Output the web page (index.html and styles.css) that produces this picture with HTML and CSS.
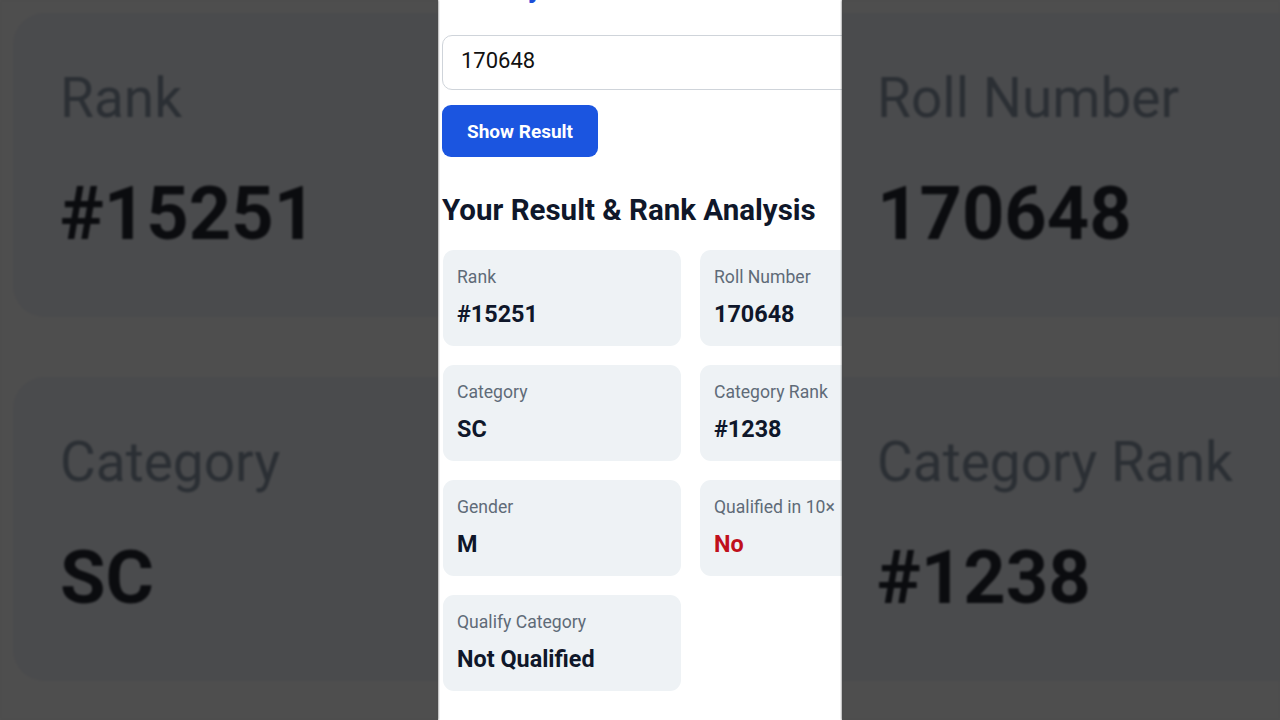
FILE: index.html
```html
<!DOCTYPE html>
<html lang="en">
<head>
<meta charset="utf-8">
<title>Your Result &amp; Rank Analysis</title>
<link rel="stylesheet" href="styles.css">
</head>
<body>
<div class="stage">
  <aside class="side side-left" aria-hidden="true">
    <div class="bcard">
      <div class="blabel">Rank</div>
      <div class="bvalue">#15251</div>
    </div>
    <div class="bcard">
      <div class="blabel">Category</div>
      <div class="bvalue">SC</div>
    </div>
  </aside>

  <main class="phone">
    <div class="phone-inner">
      <h1 class="title">Check your Rank</h1>
      <input class="roll-input" type="text" value="170648">
      <button class="btn" type="button">Show Result</button>
      <h2 class="section-title">Your Result &amp; Rank Analysis</h2>
      <div class="grid">
        <div class="card"><div class="label">Rank</div><div class="value">#15251</div></div>
        <div class="card"><div class="label">Roll Number</div><div class="value">170648</div></div>
        <div class="card"><div class="label">Category</div><div class="value">SC</div></div>
        <div class="card"><div class="label">Category Rank</div><div class="value">#1238</div></div>
        <div class="card"><div class="label">Gender</div><div class="value">M</div></div>
        <div class="card"><div class="label">Qualified in 10×</div><div class="value value-no">No</div></div>
        <div class="card"><div class="label">Qualify Category</div><div class="value">Not Qualified</div></div>
      </div>
    </div>
  </main>

  <aside class="side side-right" aria-hidden="true">
    <div class="bcard">
      <div class="blabel">Roll Number</div>
      <div class="bvalue">170648</div>
    </div>
    <div class="bcard">
      <div class="blabel">Category Rank</div>
      <div class="bvalue">#1238</div>
    </div>
  </aside>
</div>
</body>
</html>
```

FILE: styles.css
```css
* { box-sizing: border-box; }

html, body {
  margin: 0;
  padding: 0;
  width: 1280px;
  height: 720px;
  overflow: hidden;
  background: #4d4d4d;
  font-family: Roboto, "Liberation Sans", Arial, sans-serif;
}

.stage {
  display: flex;
  width: 1280px;
  height: 720px;
}

/* ---------- blurred side panels ---------- */
.side {
  width: 438px;
  height: 720px;
  overflow: hidden;
  background: #4e4e4e;
  display: flex;
  flex-direction: column;
  gap: 60px;
  padding-top: 13px;
  filter: blur(1.2px);
}

.side-left { padding-left: 13px; }
.side-right { padding-left: 0; }

.bcard {
  flex: none;
  width: 520px;
  height: 304px;
  background: #4a4b4d;
  border-radius: 32px;
  padding: 53px 0 0 47px;
}

.side-right .bcard {
  border-radius: 0 32px 32px 0;
  padding-left: 35px;
}

.blabel {
  font-size: 55px;
  line-height: 64px;
  color: #2b2f34;
  white-space: nowrap;
}

.bvalue {
  margin-top: 40px;
  font-size: 74px;
  line-height: 88px;
  font-weight: 700;
  color: #0b0c0f;
  white-space: nowrap;
}

/* ---------- phone column ---------- */
.phone {
  width: 404px;
  height: 720px;
  overflow: hidden;
  background: #ffffff;
}

.phone-inner {
  width: 460px;
  padding-left: 4px;
  display: flex;
  flex-direction: column;
  align-items: flex-start;
}

.title {
  margin: -28px 0 0 0;
  font-size: 28px;
  line-height: 32px;
  font-weight: 700;
  color: #1d4ed8;
  white-space: nowrap;
}

.roll-input {
  margin-top: 31px;
  width: 440px;
  height: 55px;
  border: 1px solid #cfd4da;
  border-radius: 10px;
  padding: 0 0 4px 18px;
  font-family: Roboto, "Liberation Sans", Arial, sans-serif;
  font-size: 22px;
  color: #111111;
  background: #ffffff;
  outline: none;
}

.btn {
  margin-top: 15px;
  width: 156px;
  height: 52px;
  border: none;
  border-radius: 9px;
  background: #1b55e0;
  color: #ffffff;
  font-family: Roboto, "Liberation Sans", Arial, sans-serif;
  font-size: 19px;
  font-weight: 700;
  padding: 0;
}

.section-title {
  margin: 36px 0 0 0;
  font-size: 29.5px;
  line-height: 34px;
  font-weight: 700;
  color: #0f172a;
  white-space: nowrap;
}

.grid {
  margin: 23px 0 0 1px;
  display: grid;
  grid-template-columns: 238px 238px;
  grid-auto-rows: 96px;
  column-gap: 19px;
  row-gap: 19px;
}

.card {
  background: #eef2f5;
  border-radius: 11px;
  padding: 15px 14px 0 14px;
}

.label {
  font-size: 17.6px;
  line-height: 24px;
  color: #5f6b78;
  white-space: nowrap;
}

.value {
  margin-top: 10px;
  font-size: 23.4px;
  line-height: 30px;
  font-weight: 700;
  color: #0f172a;
  white-space: nowrap;
}

.value-no { color: #c0101c; }
```
